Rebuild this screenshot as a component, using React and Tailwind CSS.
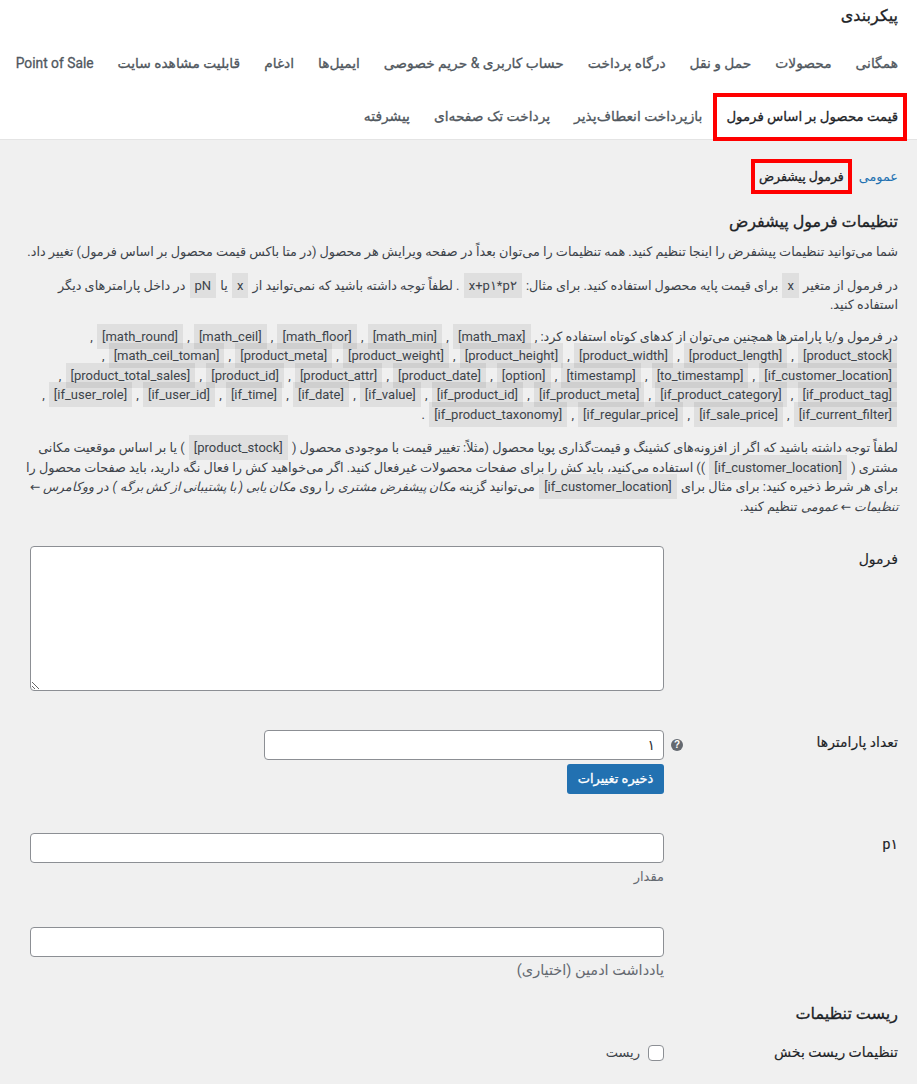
import React from 'react';

const firstRowTabs = ['همگانی', 'محصولات', 'حمل و نقل', 'درگاه پرداخت', 'حساب کاربری & حریم خصوصی', 'ایمیل‌ها', 'ادغام', 'قابلیت مشاهده سایت', 'Point of Sale'];
const secondRowTabs = ['بازپرداخت انعطاف‌پذیر', 'پرداخت تک صفحه‌ای', 'پیشرفته'];

const shortcodes = [
  'math_max', 'math_min', 'math_floor', 'math_ceil', 'math_round',
  'product_stock', 'product_length', 'product_width', 'product_height', 'product_weight', 'product_meta', 'math_ceil_toman',
  'if_customer_location', 'to_timestamp', 'timestamp', 'option', 'product_date', 'product_attr', 'product_id', 'product_total_sales',
  'if_product_tag', 'if_product_category', 'if_product_meta', 'if_product_id', 'if_value', 'if_date', 'if_time', 'if_user_id', 'if_user_role',
  'if_current_filter', 'if_sale_price', 'if_regular_price', 'if_product_taxonomy',
];

const Code = ({ children }) => (
  <code dir="ltr" className="bg-black/[0.07] py-[5px] px-[5px] mx-px text-[13px] font-['Roboto',sans-serif]">
    {children}
  </code>
);

const Em = ({ children }) => <em className="text-[12.4px]">{children}</em>;

const Tab = ({ label }) => (
  <a className="h-12 flex items-center px-3 text-[13.8px] [-webkit-text-stroke:0.3px_currentColor] text-[#50575e] whitespace-nowrap">{label}</a>
);

function App() {
  return (
    <div dir="rtl" className="h-[1084px] overflow-hidden bg-[#f0f0f0] font-['Roboto','DejaVu_Sans',sans-serif] text-[12.8px] leading-[19.5px] text-[#3c434a]">
      {/* Header and tabs */}
      <div className="bg-white h-[140px] pr-[19px] border-b border-[#e4e4e4]">
        <h1 className="pt-[6px] text-[16px] leading-5 [-webkit-text-stroke:0.3px_currentColor] text-[#1d2327]">پیکربندی</h1>
        <div className="-mr-3 mt-[14px] flex">
          {firstRowTabs.map((tab) => <Tab key={tab} label={tab} />)}
        </div>
        <div className="-mr-3 mt-[5px] flex">
          <a className="relative h-12 flex items-center px-3 text-[13.3px] [-webkit-text-stroke:0.3px_currentColor] text-[#1d2327] whitespace-nowrap">
            قیمت محصول بر اساس فرمول
            <span className="absolute top-0 bottom-0 right-[3px] left-[-1px] border-4 border-[#f00]"></span>
          </a>
          {secondRowTabs.map((tab) => <Tab key={tab} label={tab} />)}
        </div>
      </div>

      <div className="pr-[19px] pl-[20px]">
        {/* Sub navigation */}
        <div className="flex items-center mt-[19px] h-[35px]">
          <a className="text-[#2271b1]">عمومی</a>
          <span className="mr-[7px] h-[35px] flex items-center border-4 border-[#f00] px-[4px] text-[12.5px] [-webkit-text-stroke:0.3px_currentColor] text-[#1d2327]">فرمول پیشفرض</span>
        </div>

        <h2 className="mt-[14px] text-[16px] leading-[27px] [-webkit-text-stroke:0.3px_currentColor] text-[#1d2327]">تنظیمات فرمول پیشفرض</h2>
        <p className="mt-[7px]">
          شما می‌توانید تنظیمات پیشفرض را اینجا تنظیم کنید. همه تنظیمات را می‌توان بعداً در صفحه ویرایش هر محصول (در متا باکس قیمت محصول بر اساس فرمول) تغییر داد.
        </p>
        <p className="mt-[14px]">
          در فرمول از متغیر <Code>x</Code> برای قیمت پایه محصول استفاده کنید. برای مثال: <Code>x+p۱*p۲</Code> . لطفاً توجه داشته باشید که نمی‌توانید از <Code>x</Code> یا <Code>pN</Code> در داخل پارامترهای دیگر استفاده کنید.
        </p>
        <p className="mt-[12px]">
          در فرمول و/یا پارامترها همچنین می‌توان از کدهای کوتاه استفاده کرد:{' '}
          {shortcodes.map((code) => (
            <React.Fragment key={code}>, <Code>[{code}]</Code> </React.Fragment>
          ))}
          .
        </p>
        <p className="mt-[14px]">
          لطفاً توجه داشته باشید که اگر از افزونه‌های کشینگ و قیمت‌گذاری پویا محصول (مثلاً: تغییر قیمت با موجودی محصول ( <Code>[product_stock]</Code> ) یا بر اساس موقعیت مکانی مشتری ( <Code>[if_customer_location]</Code> )) استفاده می‌کنید، باید کش را برای صفحات محصولات غیرفعال کنید. اگر می‌خواهید کش را فعال نگه دارید، باید صفحات محصول را برای هر شرط ذخیره کنید: برای مثال برای <Code>[if_customer_location]</Code> می‌توانید گزینه <Em>مکان پیشفرض مشتری</Em> را روی <Em>مکان یابی ( با پشتیبانی از کش برگه )</Em> در <Em>ووکامرس ← تنظیمات ← عمومی</Em> تنظیم کنید.
        </p>

        {/* Formula */}
        <div className="mt-[30px] flex">
          <label className="w-[234px] pt-[4px] text-[14px] [-webkit-text-stroke:0.15px_currentColor] text-[#1d2327]">فرمول</label>
          <textarea className="block w-[634px] h-[145px] bg-white border border-[#8c8f94] rounded-[4px]"></textarea>
        </div>

        {/* Number of params */}
        <div className="mt-[39px] flex">
          <label className="w-[208px] pt-[3px] text-[14px] [-webkit-text-stroke:0.15px_currentColor] text-[#1d2327]">تعداد پارامترها</label>
          <div className="w-[26px] pt-[9px] flex justify-center">
            <span className="w-3 h-3 rounded-full bg-[#646970] text-white text-[10px] leading-3 font-bold text-center font-['Liberation_Sans',sans-serif]">?</span>
          </div>
          <div className="w-[400px]">
            <input readOnly value="۱" className="block w-full h-[30px] bg-white border border-[#8c8f94] rounded-[4px] px-2 text-[14px] text-[#2c3338]" />
            <button className="block mt-[4px] w-[97px] h-[30px] bg-[#2271b1] rounded-[3px] text-white text-[13px] [-webkit-text-stroke:0.3px_currentColor]">ذخیره تغییرات</button>
          </div>
        </div>

        {/* First param */}
        <div className="mt-[39px] flex">
          <label className="w-[234px] pt-[2px] text-[14px] [-webkit-text-stroke:0.15px_currentColor] text-[#1d2327]">p۱</label>
          <div className="w-[634px]">
            <input className="block w-full h-[30px] bg-white border border-[#8c8f94] rounded-[4px]" />
            <p className="mt-[4px] text-[13px] text-[#646970]">مقدار</p>
            <input className="block w-full h-[30px] mt-[40px] bg-white border border-[#8c8f94] rounded-[4px]" />
            <p className="mt-[4px] text-[14.5px] text-[#646970]">یادداشت ادمین (اختیاری)</p>
          </div>
        </div>

        {/* Reset */}
        <h2 className="mt-[22px] text-[16px] leading-6 [-webkit-text-stroke:0.3px_currentColor] text-[#1d2327]">ریست تنظیمات</h2>
        <div className="mt-[17px] flex items-center">
          <label className="w-[234px] text-[14px] [-webkit-text-stroke:0.15px_currentColor] text-[#1d2327]">تنظیمات ریست بخش</label>
          <span className="w-4 h-4 bg-white border border-[#8c8f94] rounded-[4px]"></span>
          <span className="mr-2 text-[13px]">ریست</span>
        </div>
      </div>
    </div>
  );
}

export default App;
